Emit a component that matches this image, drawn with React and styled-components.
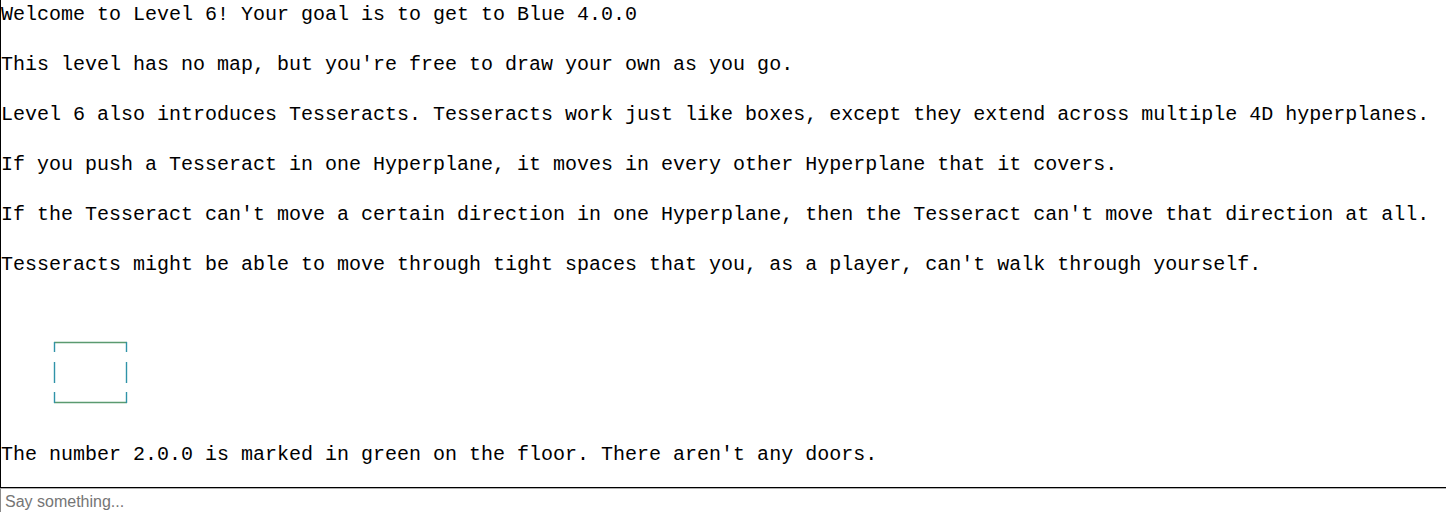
import React from 'react'
import styled, { createGlobalStyle } from 'styled-components'

const GlobalStyle = createGlobalStyle`
  html, body {
    margin: 0;
    padding: 0;
    background: #fff;
    overflow: hidden;
  }
`

const lines = [
  'Welcome to Level 6! Your goal is to get to Blue 4.0.0',
  "This level has no map, but you're free to draw your own as you go.",
  'Level 6 also introduces Tesseracts. Tesseracts work just like boxes, except they extend across multiple 4D hyperplanes.',
  'If you push a Tesseract in one Hyperplane, it moves in every other Hyperplane that it covers.',
  "If the Tesseract can't move a certain direction in one Hyperplane, then the Tesseract can't move that direction at all.",
  "Tesseracts might be able to move through tight spaces that you, as a player, can't walk through yourself.",
]

function Room() {
  return (
    <svg width='80' height='70' viewBox='0 0 80 70'>
      <g stroke='#5a9a70' strokeWidth='1.4'>
        <line x1='4' y1='7.5' x2='77' y2='7.5' />
        <line x1='4' y1='67.5' x2='77' y2='67.5' />
      </g>
      <g stroke='#2f93a8' strokeWidth='1.4'>
        <line x1='4.5' y1='7' x2='4.5' y2='17' />
        <line x1='4.5' y1='27' x2='4.5' y2='48' />
        <line x1='4.5' y1='57' x2='4.5' y2='68' />
        <line x1='76.5' y1='7' x2='76.5' y2='17' />
        <line x1='76.5' y1='27' x2='76.5' y2='48' />
        <line x1='76.5' y1='57' x2='76.5' y2='68' />
      </g>
    </svg>
  )
}

export default function App() {
  return (
    <Page>
      <GlobalStyle />
      <Output>
        {lines.map((t) => (
          <Line key={t}>{t}</Line>
        ))}
        <MapArea>
          <Room />
        </MapArea>
        <Line>The number 2.0.0 is marked in green on the floor. There aren't any doors.</Line>
      </Output>
      <Input placeholder='Say something...' />
    </Page>
  )
}

const Page = styled.div`
  display: flex;
  flex-direction: column;
  width: 1446px;
  height: 512px;
  overflow: hidden;
`

const Output = styled.div`
  flex: none;
  height: 488px;
  box-sizing: border-box;
  border-left: 1px solid #000;
  border-bottom: 1px solid #000;
  overflow: hidden;
  font-family: 'Liberation Mono', 'Courier New', monospace;
  font-size: 20px;
  color: #000;
`

const Line = styled.p`
  margin: 0 0 20px;
  line-height: 30px;
  white-space: pre;
`

const MapArea = styled.div`
  height: 120px;
  padding: 35px 0 0 49px;
  box-sizing: border-box;
  margin: 0 0 20px;
`

const Input = styled.input`
  flex: none;
  display: block;
  width: 1450px;
  height: 27px;
  box-sizing: border-box;
  margin: 0;
  padding: 0 4px;
  border: 1px solid #8a8a8a;
  border-top-color: #b0b0b0;
  font-family: 'Liberation Sans', Arial, sans-serif;
  font-size: 16px;
  color: #000;
  outline: none;

  &::placeholder {
    color: #757575;
  }
`
